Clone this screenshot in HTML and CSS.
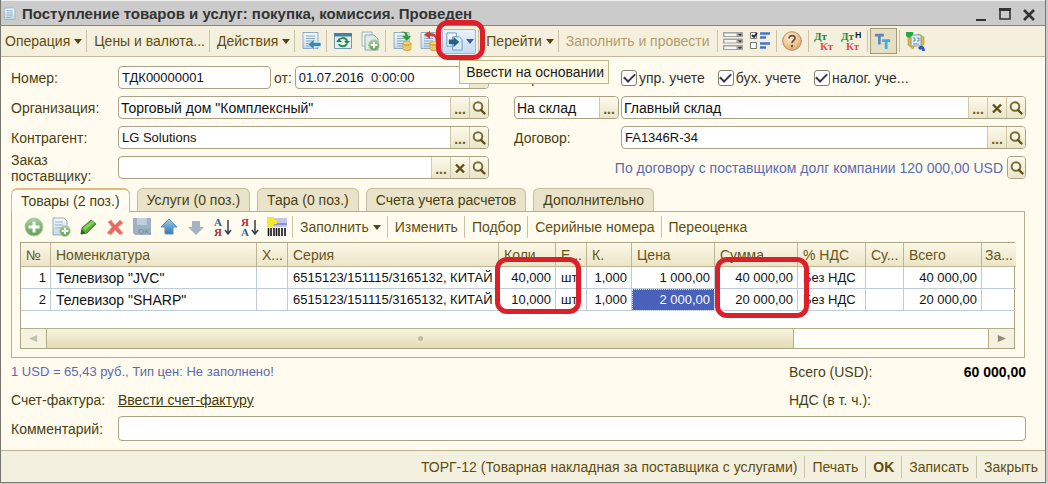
FILE: index.html
```html
<!DOCTYPE html>
<html lang="ru">
<head>
<meta charset="utf-8">
<title>Поступление товаров и услуг</title>
<link rel="stylesheet" href="styles.css">
</head>
<body>
<svg class="defs" aria-hidden="true">
  <defs>
    <linearGradient id="gPaper" x1="0" y1="0" x2="0" y2="1"><stop offset="0" stop-color="#f4f9fc"/><stop offset="1" stop-color="#c3d9e8"/></linearGradient>
    <linearGradient id="gBlue" x1="0" y1="0" x2="0" y2="1"><stop offset="0" stop-color="#9fd0f0"/><stop offset="1" stop-color="#2f78b4"/></linearGradient>
    <linearGradient id="gGreen" x1="0" y1="0" x2="0" y2="1"><stop offset="0" stop-color="#a5cf9c"/><stop offset="1" stop-color="#5f9f55"/></linearGradient>
    <radialGradient id="gHelp" cx=".4" cy=".3" r=".8"><stop offset="0" stop-color="#fff0d8"/><stop offset="1" stop-color="#e2a45c"/></radialGradient>
  </defs>
  <symbol id="lens" viewBox="0 0 16 16"><circle cx="7" cy="6.500" r="4.300" fill="#fbf8e6" stroke="#7a6d37" stroke-width="2"/><path d="M10 10l3.500 3.500" stroke="#5d4e17" stroke-width="2.400" stroke-linecap="round"/></symbol>
  <symbol id="cross" viewBox="0 0 16 16"><path d="M4 4.500l8 8M12 4.500l-8 8" stroke="#5d4f16" stroke-width="2.400"/></symbol>
  <symbol id="paper" viewBox="0 0 20 20"><path d="M2 1.500h15v16H2z" fill="url(#gPaper)" stroke="#8eacc0"/><path d="M5 5h9M5 7.500h9M5 10h9M5 12.500h9M5 15h6" stroke="#8ba9bb"/></symbol>
  <symbol id="coins" viewBox="0 0 10 10"><path d="M1 2v6c0 2 8 2 8 0V2z" fill="#e5b03a" stroke="#c18c20" stroke-width=".6"/><ellipse cx="5" cy="2.200" rx="4" ry="1.600" fill="#f8dc80" stroke="#c18c20" stroke-width=".6"/><path d="M1 4.500c0 2 8 2 8 0M1 6.500c0 2 8 2 8 0" fill="none" stroke="#fbe59a"/></symbol>
  <symbol id="plus" viewBox="0 0 20 20"><circle cx="10" cy="10" r="9" fill="url(#gGreen)" stroke="#b4c9a5"/><path d="M10 4.500v11M4.500 10h11" stroke="#fff" stroke-width="3"/></symbol>
</svg>

<main class="window">
  <header class="titlebar">
    <svg class="doc" viewBox="0 0 20 20"><use href="#paper"/></svg>
    <h1>Поступление товаров и услуг: покупка, комиссия. Проведен</h1>
    <button class="win" aria-label="Свернуть"><svg viewBox="0 0 16 16"><path d="M3 14h10" stroke="#333" stroke-width="2"/></svg></button>
    <button class="win" aria-label="Развернуть"><svg viewBox="0 0 16 16"><path d="M3 4h10v9H3z" fill="none" stroke="#333" stroke-width="1.600"/><path d="M2 3.500h12" stroke="#333" stroke-width="3"/></svg></button>
    <button class="win" aria-label="Закрыть окно"><svg viewBox="0 0 16 16"><path d="M3 4l10 10M13 4L3 14" stroke="#333" stroke-width="2.600"/></svg></button>
  </header>

  <nav class="toolbar">
    <button class="tb first">Операция<i class="arrow"></i></button><hr>
    <button class="tb">Цены и валюта...</button><hr>
    <button class="tb">Действия<i class="arrow"></i></button><hr>
    <button class="ic" aria-label="Перейти к документу"><svg viewBox="0 0 20 20"><use href="#paper"/><path d="M20 11.500h-7V8l-6 5.500 6 5.500v-3.500h7z" fill="#3d87b5" stroke="#d9edf7" stroke-width=".7"/></svg></button><hr>
    <button class="ic" aria-label="Обновить"><svg viewBox="0 0 20 20"><path d="M1.500 2.500h17v15h-17z" fill="#e4f0f3" stroke="#6e9cb3"/><path d="M1 2h18v3.500H1z" fill="#477fa8"/><path d="M5 11c1-5 8-5 9-1" fill="none" stroke="#2c904c" stroke-width="2"/><path d="M11 10h6l-3 3zM3 11l3-3 3 3z" fill="#247c3f"/><path d="M6 13c1 3 6 3 8 0" fill="none" stroke="#2c904c" stroke-width="2"/></svg></button>
    <button class="ic" aria-label="Скопировать"><svg viewBox="0 0 20 20"><path d="M2 1h10v14H2z" fill="#eaf2f3" stroke="#9db6bc"/><path d="M5 4h9l4 4v11H5z" fill="#dfeaec" stroke="#8ba8b1"/><svg x="8" y="8" width="12" height="12"><use href="#plus" width="12" height="12"/></svg></svg></button><hr>
    <button class="ic" aria-label="Провести"><svg viewBox="0 0 20 20"><use href="#paper"/><path d="M8 1c4 0 5 1 5 4h-3l5 5 4-5h-3c0-4-3-5-8-4z" fill="#319e35"/><use href="#coins" x="10" y="10" width="10" height="10"/></svg></button>
    <button class="ic" aria-label="Отменить проведение"><svg viewBox="0 0 20 20"><use href="#paper"/><path d="M16 10c1-4-1-5-5-5V8L5 3.500 11 0v2c6 0 8 3 5 8z" fill="#e0382c"/><use href="#coins" x="10" y="10" width="10" height="10"/></svg></button>
    <div class="basis">
      <button class="hot" aria-label="Ввести на основании"><svg viewBox="0 0 20 20"><path d="M2 1h10v14H2z" fill="#eef6fb" stroke="#6d9bb9"/><path d="M8 5h7l3 3v11H8z" fill="#d9eaf4" stroke="#6d9bb9"/><path d="M4 8h5V5l6 5.500L9 16v-3H4z" fill="#24628a"/></svg><i class="arrow blue"></i></button>
      <span class="mark mark-button"></span>
      <span class="tip" role="tooltip">Ввести на основании</span>
    </div><hr>
    <button class="tb">Перейти<i class="arrow"></i></button><hr>
    <button class="tb" disabled>Заполнить и провести</button><hr>
    <button class="ic" aria-label="Список"><svg viewBox="0 0 20 20"><path d="M0 1h20v5H0zM0 7.500h20v5H0zM0 14h20v5H0z" fill="#a3a3a3"/><path d="M1.500 2.500h12v2.500h-12zM1.500 9h12v2.500h-12zM1.500 15.500h12v2.500h-12z" fill="#f5f5f5"/><path d="M15 3h4l-2 2zM15 9.500h4l-2 2zM15 16h4l-2 2z" fill="#333"/></svg></button>
    <button class="ic" aria-label="Настройка"><svg viewBox="0 0 20 20"><path d="M.5 1.500h6v6h-6zM.5 11.500h6v6h-6z" fill="#fff" stroke="#777"/><path d="M2 4l2 2 3-4" fill="none" stroke="#222" stroke-width="1.800"/><path d="M10 2.500h10M10 6.500h6M10 12.500h10M10 16.500h6" stroke="#4377cf" stroke-width="2.500"/></svg></button><hr>
    <button class="ic" aria-label="Справка"><svg viewBox="0 0 20 20"><circle cx="10" cy="10" r="9.300" fill="url(#gHelp)" stroke="#b08a68"/><path d="M7 7.500c0-4 6.500-3.500 6 0-.2 2-3 2-3 4.500" fill="none" stroke="#6e513c" stroke-width="1.800"/><circle cx="10" cy="15" r="1.200" fill="#6e513c"/></svg></button><hr>
    <button class="ic" aria-label="Дт Кт"><svg viewBox="0 0 20 20"><text x="0" y="9" class="dt">Дт</text><text x="6" y="19" class="kt">Кт</text></svg></button>
    <button class="ic" aria-label="Дт Кт налоговый"><svg viewBox="0 0 20 20"><text x="0" y="9" class="dt">Дт</text><text x="14" y="7" class="n">Н</text><text x="5" y="19" class="kt">Кт</text></svg></button><hr>
    <button class="ic pressed" aria-label="Шрифт" aria-pressed="true"><svg viewBox="0 0 20 20"><path d="M1 2h10v3H7.500v9h-3V5H1z" fill="#6385bd"/><path d="M9 8h9v3h-3v8h-3v-8H9z" fill="#3daee2"/></svg></button><hr>
    <button class="ic" aria-label="Структура подчиненности"><svg viewBox="0 0 20 20"><path d="M3 5v9l5 4 1-3-3-2V6zM13 3l6 3v7l-4 3-1-3 2-1V8z" fill="#e8b83d" stroke="#b28620" stroke-width=".6"/><path d="M6 4h10v11H6z" fill="#e1eff4" stroke="#7ba1b4"/><path d="M8 7h2v3H8M12 7h2v3h-2M8 13h6" fill="none" stroke="#6c8ea0"/><path d="M1 1h7v3l-4 3-3-2z" fill="#2ca640"/><path d="M13 17c3-4 7-2 7 3h-3c0-2-1-2-2-1z" fill="#315ea7"/></svg></button>
  </nav>

  <form class="form">
    <label for="num">Номер:</label>
    <div class="pair">
      <div class="field number"><input id="num" class="small" value="ТДК00000001"></div>
      <label for="date">от:</label>
      <div class="field"><input id="date" class="small" value="01.07.2016  0:00:00"><button type="button" aria-label="Календарь"><svg viewBox="0 0 16 16"><path d="M3 4h10v8H3z" fill="#ece7c9" stroke="#75683a" stroke-width="1.500"/><path d="M5 7h6M5 9.500h6" stroke="#75683a"/></svg></button></div>
    </div>
    <span class="label">Отразить в:</span>
    <div class="checks">
      <label><input type="checkbox" checked>упр. учете</label>
      <label><input type="checkbox" checked>бух. учете</label>
      <label><input type="checkbox" checked>налог. уче...</label>
    </div>

    <label for="org">Организация:</label>
    <div class="field"><input id="org" value="Торговый дом &quot;Комплексный&quot;"><button type="button" class="dots">...</button><button type="button" aria-label="Открыть"><svg><use href="#lens"/></svg></button></div>
    <div class="field kind"><input aria-label="Вид поступления" value="На склад"><button type="button" class="dots">...</button></div>
    <div class="field"><input aria-label="Склад" value="Главный склад"><button type="button" class="dots">...</button><button type="button" aria-label="Очистить"><svg><use href="#cross"/></svg></button><button type="button" aria-label="Открыть"><svg><use href="#lens"/></svg></button></div>

    <label for="agent">Контрагент:</label>
    <div class="field"><input id="agent" class="small" value="LG Solutions"><button type="button" class="dots">...</button><button type="button" aria-label="Открыть"><svg><use href="#lens"/></svg></button></div>
    <label for="contract">Договор:</label>
    <div class="field"><input id="contract" class="small" value="FA1346R-34"><button type="button" class="dots">...</button><button type="button" aria-label="Открыть"><svg><use href="#lens"/></svg></button></div>

    <label for="order" class="two">Заказ<br>поставщику:</label>
    <div class="field"><input id="order"><button type="button" class="dots">...</button><button type="button" aria-label="Очистить"><svg><use href="#cross"/></svg></button><button type="button" aria-label="Открыть"><svg><use href="#lens"/></svg></button></div>
    <div class="debt"><span>По договору с поставщиком долг компании 120 000,00 USD</span><div class="field lone"><button type="button" aria-label="Открыть"><svg><use href="#lens"/></svg></button></div></div>
  </form>

  <div class="tabs" role="tablist">
    <button role="tab" aria-selected="true">Товары (2 поз.)</button>
    <button role="tab">Услуги (0 поз.)</button>
    <button role="tab">Тара (0 поз.)</button>
    <button role="tab">Счета учета расчетов</button>
    <button role="tab">Дополнительно</button>
  </div>

  <section class="panel">
    <div class="tools">
      <button class="ic" aria-label="Добавить"><svg><use href="#plus"/></svg></button>
      <button class="ic" aria-label="Добавить копированием"><svg viewBox="0 0 20 20"><path d="M2 1h11l3 3v14H2z" fill="url(#gPaper)" stroke="#95adba"/><path d="M4 5h8M4 8h8M4 11h6" stroke="#9fb5c0"/><use href="#plus" x="8" y="8" width="12" height="12"/></svg></button>
      <button class="ic" aria-label="Изменить строку"><svg viewBox="0 0 20 20"><path d="M3 17l1-6L13 3l5 4-9 9z" fill="#59ad38" stroke="#3f8330"/><path d="M5 11L14 4l2 2-9 7z" fill="#8bd25f"/><path d="M3 17l1-4 3 3z" fill="#284f22"/></svg></button>
      <button class="ic" aria-label="Удалить"><svg viewBox="0 0 20 20"><path d="M3 5l3-2 4 5 5-5 3 3-5 4 5 6-3 2-5-5-4 5-4-2 5-6z" fill="#e76a62" stroke="#f1a7a1"/></svg></button>
      <button class="ic" aria-label="Закончить редактирование"><svg viewBox="0 0 20 20"><path d="M1 1h18v17H3l-2-2z" fill="#9eb2c5"/><path d="M5 1h10v7H5z" fill="#c2ced9"/><text x="6" y="17" class="ok">OK</text></svg></button>
      <button class="ic" aria-label="Вверх"><svg viewBox="0 0 20 20"><path d="M10 2l8 8h-4v7H6v-7H2z" fill="url(#gBlue)" stroke="#5b91b9"/></svg></button>
      <button class="ic" aria-label="Вниз"><svg viewBox="0 0 20 20"><path d="M10 18l8-8h-4V4H6v6H2z" fill="#a4b2c1"/></svg></button>
      <button class="ic" aria-label="По возрастанию"><svg viewBox="0 0 20 20"><text x="1" y="9" class="sa">А</text><text x="1" y="19" class="sr">Я</text><path d="M15 3v13M12 13l3 4 3-4" fill="none" stroke="#333f4b" stroke-width="1.500"/></svg></button>
      <button class="ic" aria-label="По убыванию"><svg viewBox="0 0 20 20"><text x="1" y="9" class="sr">Я</text><text x="1" y="19" class="sa">А</text><path d="M15 3v13M12 13l3 4 3-4" fill="none" stroke="#333f4b" stroke-width="1.500"/></svg></button>
      <button class="ic" aria-label="Штрихкод"><svg viewBox="0 0 20 20"><path d="M1 1h19v9H1z" fill="#c2c7e8"/><path d="M1 6h19v2H1z" fill="#8f92c7"/><path d="M0 0h7v3h3v4H7v3H0z" fill="#f4e72c"/><path d="M0 10h20v10H0z" fill="#fff"/><path d="M1.500 11v8M4 11v8M7 11v8M9.500 11v8M12 11v8M15 11v8M18 11v8" stroke="#111" stroke-width="1.600"/></svg></button><hr>
      <button class="tb">Заполнить<i class="arrow"></i></button><hr>
      <button class="tb">Изменить</button><hr>
      <button class="tb">Подбор</button><hr>
      <button class="tb">Серийные номера</button><hr>
      <button class="tb">Переоценка</button>
    </div>

    <div class="grid">
      <table>
        <colgroup><col class="c-no"><col class="c-name"><col class="c-x"><col class="c-ser"><col class="c-qty"><col class="c-x"><col class="c-k"><col class="c-sum"><col class="c-sum"><col class="c-vat"><col class="c-su"><col class="c-all"><col class="c-last"></colgroup>
        <thead><tr><th>№</th><th>Номенклатура</th><th>Х...</th><th>Серия</th><th>Коли...</th><th>Е...</th><th>К.</th><th>Цена</th><th>Сумма</th><th>% НДС</th><th>Су...</th><th>Всего</th><th>За...</th></tr></thead>
        <tbody>
          <tr><td class="r">1</td><td class="name">Телевизор "JVC"</td><td></td><td>6515123/151115/3165132, КИТАЙ</td><td class="r host">40,000<span class="mark mark-qty"></span></td><td>шт</td><td class="r">1,000</td><td class="r">1 000,00</td><td class="r host">40 000,00<span class="mark mark-sum"></span></td><td>Без НДС</td><td></td><td class="r">40 000,00</td><td></td></tr>
          <tr><td class="r">2</td><td class="name">Телевизор "SHARP"</td><td></td><td>6515123/151115/3165132, КИТАЙ</td><td class="r">10,000</td><td>шт</td><td class="r">1,000</td><td class="r sel">2 000,00</td><td class="r">20 000,00</td><td>Без НДС</td><td></td><td class="r">20 000,00</td><td></td></tr>
        </tbody>
      </table>
      <div class="scroll"><button aria-label="Влево"><svg viewBox="0 0 10 10"><path d="M9 1v8L0 5z" fill="#c2bfae"/></svg></button><div class="thumb"><i></i></div><div class="track"></div><button aria-label="Вправо"><svg viewBox="0 0 10 10"><path d="M1 1v8l9-4z" fill="#8d8b7e"/></svg></button></div>
    </div>
  </section>

  <section class="summary">
    <span class="rate">1 USD = 65,43 руб., Тип цен: Не заполнено!</span>
    <div class="total"><span>Всего (USD):</span><b>60 000,00</b></div>
    <div class="invoice"><span>Счет-фактура:</span><a href="#">Ввести счет-фактуру</a></div>
    <div class="total"><span>НДС (в т. ч.):</span></div>
  </section>
  <div class="comment"><label for="comment">Комментарий:</label><div class="field"><input id="comment"></div></div>

  <footer class="footer">
    <button class="tb">ТОРГ-12 (Товарная накладная за поставщика с услугами)</button><hr>
    <button class="tb">Печать</button><hr>
    <button class="tb ok-btn">OK</button><hr>
    <button class="tb">Записать</button><hr>
    <button class="tb">Закрыть</button>
  </footer>
</main>
</body>
</html>
```
FILE: styles.css
```css
* { box-sizing: border-box; }
body { margin: 0; background: #cbcbcb; font: 14px/18px "Liberation Sans", Arial, sans-serif; color: #4a3f12; }
button, input { font: inherit; color: inherit; margin: 0; padding: 0; border: 0; background: none; }
svg { display: block; }
.defs { position: absolute; width: 0; height: 0; }
.window { margin: 0 2px 0 0; border: solid #77776f; border-width: 0 1px 1px 1px; background: #fffcef; }

.titlebar { display: flex; align-items: center; height: 26px; padding: 2px 4px 0 2px; background: #cbcbcb; border-bottom: 1px solid #85857e; border-top: 1px solid #eee; }
.titlebar h1 { flex: 1; margin: 0 0 0 5px; font-size: 15px; line-height: 20px; color: #333; white-space: nowrap; }
.doc { width: 14px; height: 14px; }
.win { width: 24px; display: flex; justify-content: center; }
.win svg { width: 16px; height: 16px; }

.toolbar { display: flex; align-items: center; height: 31px; padding: 0 4px; background: #f5f0de; border-bottom: 1px solid #c2b99c; }
hr { flex: none; width: 1px; height: 22px; margin: 0 2px; border: 0; background: #cbc3a6; }
.tb { display: flex; align-items: center; flex: none; padding: 0 2px 0 5px; white-space: nowrap; color: #5f4d10; }
.tb.first { padding-left: 0; }
.tb:disabled { color: #b29c69; padding-right: 5px; }
.arrow { margin-left: 4px; border: solid transparent; border-width: 5px 4px 0; border-top-color: #55460a; }
.arrow.blue { margin-left: 2px; border-top-color: #3d5c9c; }
.ic { display: flex; flex: none; align-items: center; justify-content: center; width: 27px; height: 26px; }
.ic svg { width: 20px; height: 20px; }
.pressed { background: #e5dfc4; border: 1px solid #a39a78; }
.pressed svg { width: 18px; height: 18px; }
.basis { position: relative; }
.hot { display: flex; align-items: center; justify-content: center; width: 34px; height: 25px; border: 1px solid #9fb5d8; border-radius: 2px; background: linear-gradient(#e9f2fc, #c5daf3); }
.hot svg { width: 19px; height: 19px; }
.mark { position: absolute; border: 5px solid #dc202a; border-radius: 12px; pointer-events: none; z-index: 3; }
.mark-button { inset: -9px -9px -6px -6px; }
.tip { position: absolute; top: 31px; left: 17px; z-index: 2; padding: 2px 4px 2px 6px; border: 1px solid #beb78a; background: #fffbe3; color: #222; white-space: nowrap; }
.dt, .kt { font: bold 11px "Liberation Serif", serif; fill: #23852d; }
.kt { fill: #e44b4b; }
.n { font: bold 9px "Liberation Sans", sans-serif; fill: #222; }
.ok { font: bold 8px "Liberation Sans", sans-serif; fill: #7e93a8; }
.sa, .sr { font: bold 11px "Liberation Serif", serif; fill: #28659a; }
.sr { fill: #b22d37; }

.form { display: grid; grid-template-columns: 107px minmax(0, 371fr) 132px minmax(0, 405fr); row-gap: 7px; align-items: center; padding: 9px 19px 0 10px; }
.form > :nth-child(4n+3) { margin-left: 25px; }
.field { display: flex; flex: 1; min-width: 0; height: 23px; border: 1px solid #a9a284; border-radius: 4px; background: #fff; overflow: hidden; }
.field input { flex: 1; min-width: 0; width: 0; padding: 0 2px; color: #111; outline: 0; white-space: pre; }
.field input.small { font-size: 13px; padding: 0 3px; }
.field button { display: flex; align-items: center; justify-content: center; width: 19px; flex: none; border-left: 1px solid #d0c9a8; background: linear-gradient(#fdfaec, #ebe5c8); }
.field button svg { width: 16px; height: 16px; }
.field .dots { font-weight: bold; color: #6b5d22; padding-top: 3px; }
.pair { display: flex; align-items: center; gap: 3px; }
.pair .number { flex: 0 0 153px; }
.form > .kind { margin: 0 2px 0 25px; }
.checks { display: flex; gap: 13px; white-space: nowrap; color: #333; }
.checks label { display: flex; align-items: center; gap: 2px; }
.checks input { appearance: none; width: 16px; height: 16px; border: 1px solid #86816f; border-radius: 3px; background: #fff; display: grid; place-items: center; }
.checks input::before { content: ""; width: 9px; height: 5px; border: solid #333747; border-width: 0 0 2px 2px; rotate: -45deg; translate: 0 -1px; }
.two { line-height: 16px; height: 23px; display: flex; align-items: center; }
.form .debt { grid-column: 3 / 5; display: flex; justify-content: flex-end; align-items: center; gap: 4px; margin-left: 0; color: #5a6ab2; white-space: nowrap; }
.field.lone { flex: none; width: 19px; }
.lone button { border-left: 0; width: 17px; }

.tabs { display: flex; gap: 7px; padding: 9px 0 0 10px; }
.tabs button { height: 23px; padding: 0 9px; border: 1px solid #c5bd9c; border-bottom: 0; border-radius: 6px 6px 0 0; background: #e9e3c9; white-space: nowrap; }
.tabs [aria-selected] { position: relative; height: 24px; margin-bottom: -1px; background: #fffdf2; border-top: 2px solid #e4bd7c; }
.panel { margin: 0 20px 0 10px; padding: 0 9px 8px 8px; border: 1px solid #b7af8c; }
.tools { display: flex; align-items: center; height: 30px; }
.tools .tb { padding: 0 4px 0 5px; }

.grid { border: 1px solid #aaa480; background: #fff; }
table { width: 100%; table-layout: fixed; border-collapse: separate; border-spacing: 0; font-size: 13px; color: #111; }
th { height: 24px; padding: 0 0 0 5px; text-align: left; font-weight: normal; font-size: 14px; color: #67561c; background: linear-gradient(#fbf8e9, #ece5c6); border: solid #bdb592; border-width: 0 1px 1px 0; white-space: nowrap; overflow: hidden; }
td { height: 22px; padding: 1px 4px 0 5px; border: solid #bcccd8; border-width: 0 1px 1px 0; white-space: nowrap; overflow: hidden; }
th:last-child, td:last-child { border-right: 0; padding-left: 3px; }
.name { font-size: 14px; }
.r { text-align: right; }
.host { position: relative; overflow: visible; }
.sel { background: #4961ba; color: #fff; outline: 1px dotted #dbe2ff; outline-offset: -1px; }
.mark-qty { inset: -10px -26px -26px -4px; }
.mark-sum { inset: -10px -12px -30px 0; }
.c-no { width: 30px; } .c-name { width: 206px; } .c-x { width: 31px; } .c-ser { width: 211px; }
.c-qty { width: 57px; } .c-k { width: 45px; } .c-sum { width: 83px; } .c-vat { width: 68px; }
.c-su { width: 38px; } .c-all { width: 78px; } .c-last { width: 34px; }
.scroll { display: flex; height: 20px; margin-top: 17px; border-top: 1px solid #b5ae8b; }
.scroll button { display: grid; place-items: center; width: 26px; background: #f5f2df; border: solid #b5ae8b; border-width: 0 1px 0 0; }
.scroll button:last-child { border-width: 0 0 0 1px; }
.scroll button svg { width: 9px; height: 9px; }
.thumb { flex: 750; display: grid; place-items: center; background: linear-gradient(#f7f4e0, #e3dcb4); border-right: 1px solid #b5ae8b; }
.thumb i { width: 5px; height: 5px; border-radius: 3px; background: #c3bd9b; }
.track { flex: 195; background: #fdfcf7; }

.summary { display: grid; grid-template-columns: 1fr 237px; row-gap: 10px; padding: 5px 19px 0 10px; }
.rate { color: #5a6ab2; font-size: 13px; }
.total { display: flex; justify-content: space-between; }
.total b { color: #000; }
.invoice { display: flex; }
.invoice span { width: 107px; }
a { color: #45390c; text-decoration: underline; }
.comment { display: flex; align-items: center; padding: 7px 19px 9px 10px; }
.comment label { width: 107px; }
.comment .field { height: 25px; }
.footer { display: flex; align-items: center; justify-content: flex-end; height: 32px; padding-right: 2px; border-top: 1px solid #bab290; background: #f4f0df; }
.footer .tb { padding: 0 5px; }
.ok-btn { font-weight: bold; }
```
